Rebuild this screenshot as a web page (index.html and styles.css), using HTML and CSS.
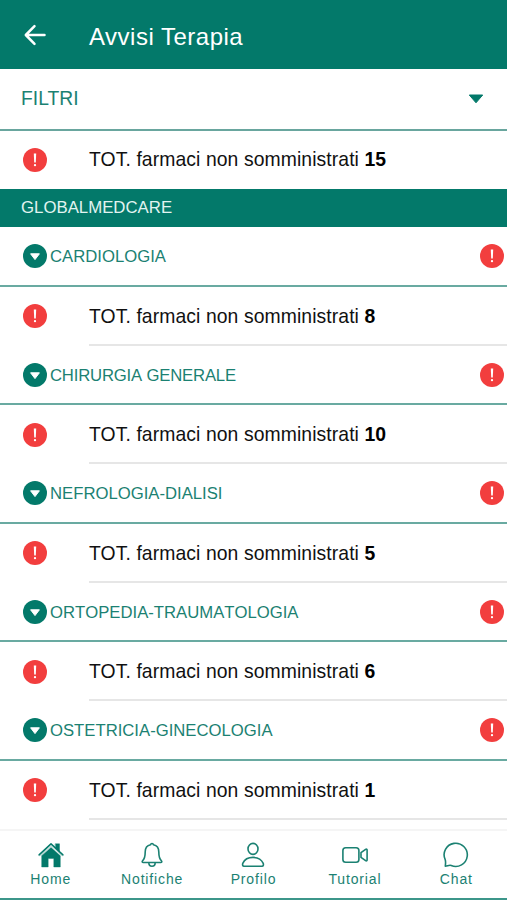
FILE: index.html
```html
<!DOCTYPE html>
<html lang="it">
<head>
<meta charset="utf-8">
<title>Avvisi Terapia</title>
<link rel="stylesheet" href="styles.css">
</head>
<body>
<svg class="defs" width="0" height="0">
  <symbol id="alert" viewBox="0 0 24 24"><circle cx="12" cy="12" r="12" fill="#f23e3e"/><path d="M10.8 5.600h2.400l-.4 8.800h-1.600z" fill="#fff"/><circle cx="12" cy="17.200" r="1.150" fill="#fff"/></symbol>
  <symbol id="drop" viewBox="0 0 24 24"><circle cx="12" cy="12" r="12" fill="#03796a"/><path d="M7.600 9.800h8.800L12 15.600z" fill="#fff" stroke="#fff" stroke-linejoin="round"/></symbol>
</svg>
<header class="bar">
  <svg class="back" viewBox="0 0 22 22"><path d="M20.500 11H2M10.500 2.200 1.800 11l8.700 8.800"/></svg>
  <h1>Avvisi Terapia</h1>
</header>
<main>
  <div class="filter"><span>FILTRI</span><svg class="caret" viewBox="0 0 16 10"><path d="M1.300 1h13.400L8 8.800z"/></svg></div>
  <div class="total first"><svg class="dot"><use href="#alert"/></svg><p>TOT. farmaci non somministrati <b>15</b></p></div>
  <div class="group">GLOBALMEDCARE</div>
  <div class="dept"><svg class="dot"><use href="#drop"/></svg><span>CARDIOLOGIA</span><svg class="dot"><use href="#alert"/></svg></div>
  <div class="total"><svg class="dot"><use href="#alert"/></svg><p>TOT. farmaci non somministrati <b>8</b></p></div>
  <div class="dept"><svg class="dot"><use href="#drop"/></svg><span class="tight">CHIRURGIA GENERALE</span><svg class="dot"><use href="#alert"/></svg></div>
  <div class="total"><svg class="dot"><use href="#alert"/></svg><p>TOT. farmaci non somministrati <b>10</b></p></div>
  <div class="dept"><svg class="dot"><use href="#drop"/></svg><span>NEFROLOGIA-DIALISI</span><svg class="dot"><use href="#alert"/></svg></div>
  <div class="total"><svg class="dot"><use href="#alert"/></svg><p>TOT. farmaci non somministrati <b>5</b></p></div>
  <div class="dept"><svg class="dot"><use href="#drop"/></svg><span>ORTOPEDIA-TRAUMATOLOGIA</span><svg class="dot"><use href="#alert"/></svg></div>
  <div class="total"><svg class="dot"><use href="#alert"/></svg><p>TOT. farmaci non somministrati <b>6</b></p></div>
  <div class="dept"><svg class="dot"><use href="#drop"/></svg><span>OSTETRICIA-GINECOLOGIA</span><svg class="dot"><use href="#alert"/></svg></div>
  <div class="total"><svg class="dot"><use href="#alert"/></svg><p>TOT. farmaci non somministrati <b>1</b></p></div>
</main>
<nav>
  <a><svg viewBox="0 0 26 26"><path class="solid" d="M17.500 1.800h4v8l-4-3.600zM13 5.400l9.300 8.300V25h-6.500v-8.600h-5.600V25H3.700V13.700z"/><path class="gap" d="M2 13.700 13 3.800l11 9.900"/><path class="roof" d="M1.100 12.900 13 1.900l11.900 11"/></svg>Home</a>
  <a><svg viewBox="0 0 26 26"><path d="M13 1.500c-.8 0-1.300.5-1.500 1.300C7.700 3.600 6.200 6.600 6.200 10c0 5.500-1.200 7.400-2.600 8.800-.8.900-.4 1.700.6 1.700h17.600c1 0 1.400-.8.6-1.700-1.400-1.400-2.600-3.300-2.600-8.800 0-3.400-1.500-6.400-5.300-7.200-.2-.8-.7-1.300-1.500-1.300zM9.800 20.500c0 2.200 1.300 3.700 3.200 3.700s3.200-1.500 3.200-3.700"/></svg>Notifiche</a>
  <a><svg viewBox="0 0 26 26"><ellipse cx="13" cy="6.900" rx="5" ry="5.500"/><path d="M13 15.400c-4.200 0-8.400 2-10.100 5.800-.6 1.300-.4 3 1.100 3h18c1.500 0 1.700-1.700 1.100-3-1.700-3.800-5.900-5.800-10.100-5.800z"/></svg>Profilo</a>
  <a><svg viewBox="0 0 26 26"><rect x=".9" y="5.800" width="16" height="14.500" rx="2.800"/><path d="m19 10.700 4.600-3.300c.7-.5 1.500-.2 1.500.7v9.900c0 .9-.8 1.200-1.500.7L19 15.400z"/></svg>Tutorial</a>
  <a><svg viewBox="0 0 26 26"><path d="M2.300 24.200c.3-2.600.6-4.600-.1-6.500A11.600 11.600 0 1 1 8.200 23.500c-1.900-.7-3.600.5-5.900.7z"/></svg>Chat</a>
</nav>
</body>
</html>
```
FILE: styles.css
```css
* { box-sizing: border-box; }
body {
  margin: 0;
  height: 900px;
  overflow: hidden;
  display: flex;
  flex-direction: column;
  background: #fff;
  color: #111;
  font-family: "Liberation Sans", Arial, sans-serif;
}
.defs { position: absolute; }
.bar {
  flex: none;
  height: 69px;
  display: flex;
  align-items: center;
  padding: 4px 24px 0;
  background: #03796a;
  color: #fff;
}
.back {
  width: 22px;
  height: 22px;
  margin: 0 43px 3px 0;
  fill: none;
  stroke: #fff;
  stroke-width: 2.5;
  stroke-linecap: round;
  stroke-linejoin: round;
}
h1 { margin: 0; font-size: 24px; font-weight: 400; letter-spacing: .5px; }
main { flex: 1; min-height: 0; overflow: hidden; }
.filter {
  height: 62px;
  display: flex;
  align-items: center;
  justify-content: space-between;
  padding: 0 23px 0 21px;
  border-bottom: 2px solid #69a69e;
  color: #1b8172;
  font-size: 19.3px;
}
.caret { width: 16px; height: 10px; fill: #03796a; stroke: #03796a; stroke-linejoin: round; }
.dot { flex: none; width: 24px; height: 24px; }
.total {
  height: 59px;
  display: flex;
  align-items: center;
  padding-left: 23px;
}
.total p {
  flex: 1;
  height: 59px;
  margin: 0 0 0 42px;
  line-height: 58px;
  font-size: 19.35px;
  letter-spacing: .09px;
  border-bottom: 2px solid #e6e6e6;
}
.total b { color: #000; }
.first, .first p { height: 58px; }
.first p { border: 0; line-height: 57px; }
.group {
  height: 38px;
  padding-left: 21px;
  line-height: 37px;
  background: #03796a;
  color: #e2f4f1;
  font-size: 16.8px;
}
.dept {
  height: 59.5px;
  display: flex;
  align-items: center;
  gap: 3px;
  padding: 1px 3px 0 23px;
  border-bottom: 2px solid #69aaa1;
  color: #1b8172;
  font-size: 16.7px;
  font-kerning: none;
}
.dept span { flex: 1; padding-top: 1.6px; }
.dept .tight { letter-spacing: -.18px; }
nav {
  flex: none;
  height: 71px;
  display: grid;
  grid-template-columns: repeat(5, 1fr);
  border-top: 2px solid #f5f5f5;
  border-bottom: 2px solid #3c968a;
  background: #fff;
}
nav a {
  display: flex;
  flex-direction: column;
  align-items: center;
  padding-top: 11px;
  color: #1b8172;
  font-size: 14px;
  line-height: 16px;
  letter-spacing: .85px;
  gap: 3px;
}
nav svg { width: 26px; height: 26px; fill: none; stroke: #1b8172; stroke-width: 1.6; stroke-linejoin: round; stroke-linecap: round; }
nav .solid { fill: #03796a; stroke: #03796a; stroke-width: .4; }
nav .gap { stroke: #b5d8d2; stroke-width: 1; }
nav .roof { stroke: #03796a; stroke-width: 1.5; }
```
